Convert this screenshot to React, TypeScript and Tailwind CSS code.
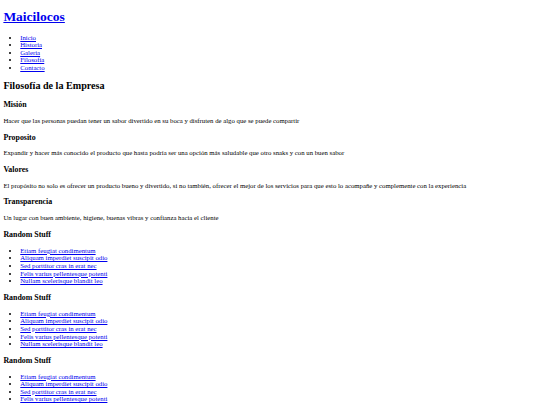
import React from 'react';

const navLinks = ['Inicio', 'Historia', 'Galeria', 'Filosofía', 'Contacto'];

const sections = [
  {
    title: 'Misión',
    text: 'Hacer que las personas puedan tener un sabor divertido en su boca y disfruten de algo que se puede compartir',
  },
  {
    title: 'Proposito',
    text: 'Expandir y hacer más conocido el producto que hasta podría ser una opción más saludable que otro snaks y con un buen sabor',
  },
  {
    title: 'Valores',
    text: 'El propósito no solo es ofrecer un producto bueno y divertido, si no también, ofrecer el mejor de los servicios para que esto lo acompañe y complemente con la experiencia',
  },
  {
    title: 'Transparencia',
    text: 'Un lugar con buen ambiente, higiene, buenas vibras y confianza hacia el cliente',
  },
];

const randomLinks = [
  'Etiam feugiat condimentum',
  'Aliquam imperdiet suscipit odio',
  'Sed porttitor cras in erat nec',
  'Felis varius pellentesque potenti',
  'Nullam scelerisque blandit leo',
];

const linkClass = 'text-[#0000ee] underline';

const App: React.FC = () => {
  return (
    <div className="bg-white text-black font-['Liberation_Serif',serif] text-[6.75px] leading-[7.6px] px-[3.375px] min-h-[405px] flow-root">
      <header>
        <h1 className="text-[13.5px] font-bold my-[9.05px] leading-[15.6px]">
          <a href="#" className={linkClass}>Maicilocos</a>
        </h1>
        <ul className="list-disc pl-[16.875px] my-[6.75px]">
          {navLinks.map(item => (
            <li key={item}>
              <a href="#" className={linkClass}>{item}</a>
            </li>
          ))}
        </ul>
      </header>

      <main>
        <h2 className="text-[10.125px] font-bold my-[8.4px] leading-[11.6px]">Filosofía de la Empresa</h2>
        {sections.map(section => (
          <div key={section.title}>
            <h3 className="text-[7.9px] font-bold my-[7.9px] leading-[9.1px]">{section.title}</h3>
            <p className="my-[6.75px]">{section.text}</p>
          </div>
        ))}
      </main>

      <aside>
        {[0, 1, 2].map(i => (
          <div key={i}>
            <h3 className="text-[7.9px] font-bold my-[7.9px] leading-[9.1px]">Random Stuff</h3>
            <ul className="list-disc pl-[16.875px] my-[6.75px]">
              {randomLinks.map(item => (
                <li key={item}>
                  <a href="#" className={linkClass}>{item}</a>
                </li>
              ))}
            </ul>
          </div>
        ))}
      </aside>
    </div>
  );
};

export default App;
